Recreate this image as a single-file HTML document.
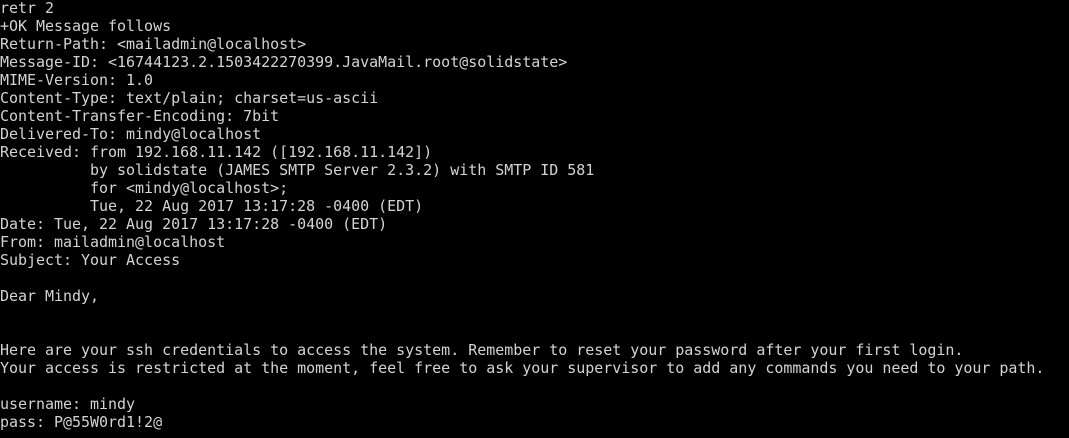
<!DOCTYPE html>
<html><head><style>
html,body{margin:0;padding:0;background:#000;width:1069px;height:438px;overflow:hidden}
pre{margin:0;padding:0;position:absolute;left:0;top:-1px;font-family:"DejaVu Sans Mono","Liberation Mono",monospace;font-size:15px;line-height:18px;letter-spacing:-0.027px;color:#d3d3d3}
</style></head><body><pre>retr 2
+OK Message follows
Return-Path: &lt;mailadmin@localhost&gt;
Message-ID: &lt;16744123.2.1503422270399.JavaMail.root@solidstate&gt;
MIME-Version: 1.0
Content-Type: text/plain; charset=us-ascii
Content-Transfer-Encoding: 7bit
Delivered-To: mindy@localhost
Received: from 192.168.11.142 ([192.168.11.142])
          by solidstate (JAMES SMTP Server 2.3.2) with SMTP ID 581
          for &lt;mindy@localhost&gt;;
          Tue, 22 Aug 2017 13:17:28 -0400 (EDT)
Date: Tue, 22 Aug 2017 13:17:28 -0400 (EDT)
From: mailadmin@localhost
Subject: Your Access

Dear Mindy,


Here are your ssh credentials to access the system. Remember to reset your password after your first login.
Your access is restricted at the moment, feel free to ask your supervisor to add any commands you need to your path.

username: mindy
pass: P@55W0rd1!2@</pre></body></html>
